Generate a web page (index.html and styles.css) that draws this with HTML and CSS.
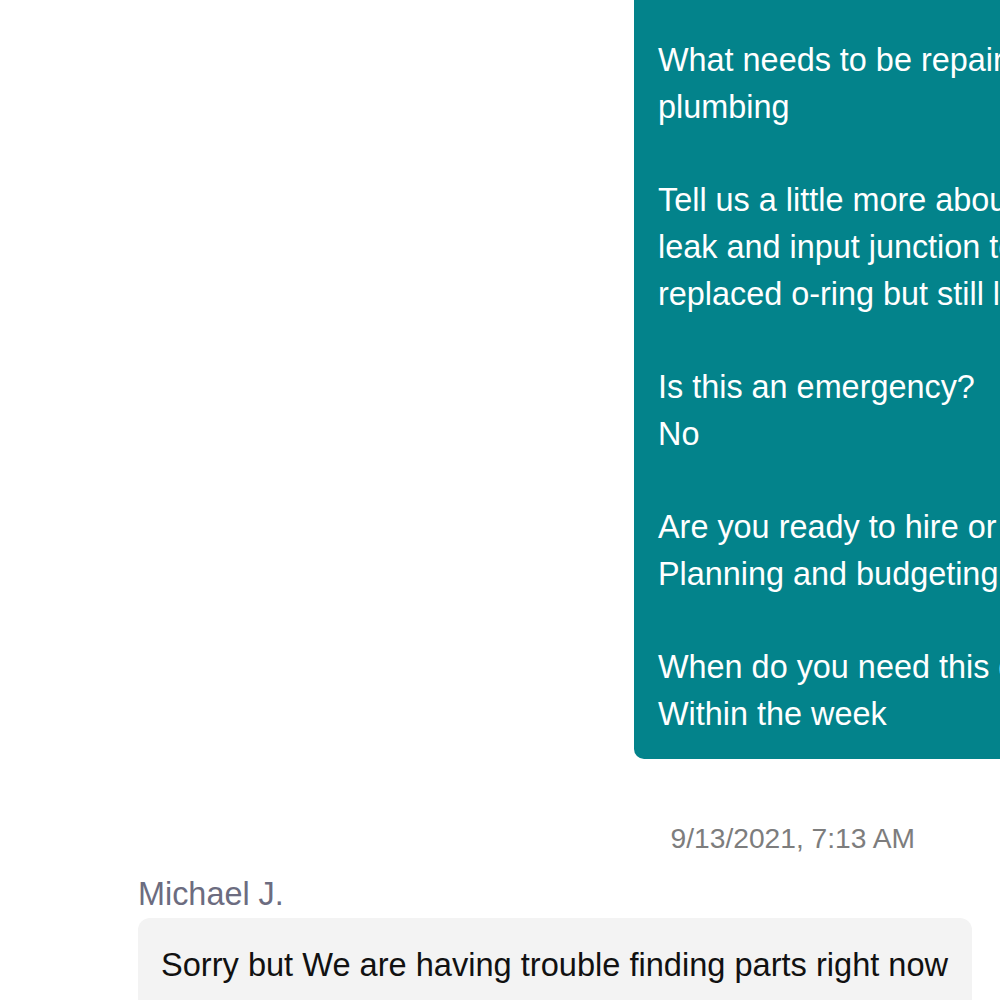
FILE: index.html
```html
<!DOCTYPE html>
<html lang="en">
<head>
    <meta charset="UTF-8">
    <title>Messages</title>
<link rel="stylesheet" href="styles.css">
</head>
<body>
    <div class="thread">
        <div class="msg-out">
            <div class="bubble-out">
                <p>Plumbing request details</p>
                <p>What needs to be repaired or replaced?<br>plumbing</p>
                <p>Tell us a little more about your project<br>leak and input junction to water heater,<br>replaced o-ring but still leaking</p>
                <p>Is this an emergency?<br>No</p>
                <p>Are you ready to hire or still planning?<br>Planning and budgeting</p>
                <p>When do you need this done?<br>Within the week</p>
            </div>
        </div>
        <div class="stamp">9/13/2021, 7:13 AM</div>
        <div class="msg-in">
            <div class="sender">Michael J.</div>
            <div class="bubble-in">Sorry but We are having trouble finding parts right now</div>
        </div>
    </div>
</body>
</html>
```

FILE: styles.css
```css
body{
    margin: 0;
    width: 1000px;
    height: 1000px;
    overflow: hidden;
    background-color: #fff;
    font-family: "Liberation Sans", Arial, sans-serif;
}
.thread{
    display: flex;
    flex-direction: column;
    margin-top: -80px;
}
/*outgoing*/
.msg-out{
    padding-left: 634px;
}
.bubble-out{
    width: 560px;
    padding: 24px 24px 21px;
    background-color: #03838b;
    color: #fff;
    border-radius: 10px;
    font-size: 32.4px;
    line-height: 46.7px;
    white-space: nowrap;
}
.bubble-out p{
    margin: 0 0 46.7px;
}
.bubble-out p:last-child{
    margin-bottom: 0;
}
/*timestamp*/
.stamp{
    align-self: flex-end;
    margin: 61px 85px 0 0;
    font-size: 28.2px;
    line-height: 36px;
    color: #7d7d7d;
}
/*incoming*/
.msg-in{
    display: flex;
    flex-direction: column;
    align-items: flex-start;
    padding: 15px 0 0 138px;
}
.sender{
    font-size: 32.4px;
    line-height: 46.7px;
    color: #6c6c80;
}
.bubble-in{
    padding: 24px 24px 24px 23px;
    background-color: #f3f3f3;
    border-radius: 12px;
    font-size: 32.6px;
    line-height: 46.7px;
    color: #111;
    white-space: nowrap;
}
```
